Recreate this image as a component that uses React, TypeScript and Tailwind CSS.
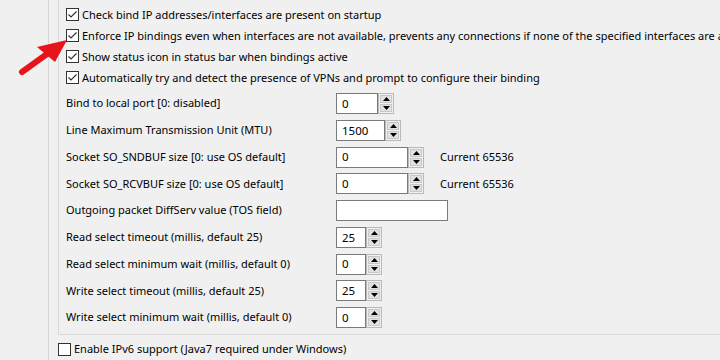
import React from 'react';

const font = { fontFamily: '"Segoe UI", "Noto Sans", sans-serif' };

function CheckBox({ checked }: { checked: boolean }) {
    return (
        <div className="w-[13px] h-[13px] border border-[#333333] bg-white flex items-center justify-center shrink-0">
            {checked && (
                <svg width="11" height="11" viewBox="0 0 11 11">
                    <path d="M1.5 5.5 L4 8 L9.5 2.5" stroke="#333" strokeWidth="1.2" fill="none" />
                </svg>
            )}
        </div>
    );
}

function Spinner({ value, width }: { value: string; width: number }) {
    return (
        <div className="flex h-[21px]">
            <div
                className="border border-[#7a7a7a] bg-white h-full flex items-center pl-[5px] text-[11.5px] text-black"
                style={{ width }}
            >
                {value}
            </div>
            <div className="w-[16px] h-full border border-[#b9b9b9] bg-[#f0f0f0] flex flex-col p-px gap-px">
                <div className="flex-1 bg-[#e1e1e1] border border-[#c8c8c8] flex items-center justify-center">
                    <svg width="7" height="4" viewBox="0 0 7 4"><path d="M0 4 L3.5 0 L7 4 Z" fill="#000" /></svg>
                </div>
                <div className="flex-1 bg-[#e1e1e1] border border-[#c8c8c8] flex items-center justify-center">
                    <svg width="7" height="4" viewBox="0 0 7 4"><path d="M0 0 L3.5 4 L7 0 Z" fill="#000" /></svg>
                </div>
            </div>
        </div>
    );
}

const checks = [
    'Check bind IP addresses/interfaces are present on startup',
    'Enforce IP bindings even when interfaces are not available, prevents any connections if none of the specified interfaces are available',
    'Show status icon in status bar when bindings active',
    'Automatically try and detect the presence of VPNs and prompt to configure their binding',
];

const rows: { label: string; value?: string; width: number; extra?: string; text?: boolean }[] = [
    { label: 'Bind to local port [0: disabled]', value: '0', width: 42 },
    { label: 'Line Maximum Transmission Unit (MTU)', value: '1500', width: 49 },
    { label: 'Socket SO_SNDBUF size [0: use OS default]', value: '0', width: 72, extra: 'Current 65536' },
    { label: 'Socket SO_RCVBUF size [0: use OS default]', value: '0', width: 72, extra: 'Current 65536' },
    { label: 'Outgoing packet DiffServ value (TOS field)', width: 112, text: true },
    { label: 'Read select timeout (millis, default 25)', value: '25', width: 30 },
    { label: 'Read select minimum wait (millis, default 0)', value: '0', width: 30 },
    { label: 'Write select timeout (millis, default 25)', value: '25', width: 30 },
    { label: 'Write select minimum wait (millis, default 0)', value: '0', width: 30 },
];

export default function App() {
    return (
        <div className="w-[720px] h-[360px] bg-[#f0f0f0] overflow-hidden relative text-[11px] text-black" style={font}>
            <div className="ml-[48px] h-full border-l border-[#d7d7d7] pl-[9px]">
                <div className="border-l border-b border-[#d9d9d9] h-[335px] pl-[7px] pt-[8px] overflow-hidden">
                    <div className="flex flex-col gap-[8px]">
                        {checks.map((c) => (
                            <div key={c} className="flex items-center gap-[3px] h-[13px] whitespace-nowrap">
                                <CheckBox checked />
                                <span className="leading-none">{c}</span>
                            </div>
                        ))}
                    </div>
                    <div className="mt-[9px] flex flex-col gap-[5.75px]">
                        {rows.map((r) => (
                            <div key={r.label} className="flex items-center h-[21px] whitespace-nowrap">
                                <div className="w-[270px]">{r.label}</div>
                                {r.text ? (
                                    <div className="h-[21px] border border-[#7a7a7a] bg-white" style={{ width: r.width }} />
                                ) : (
                                    <Spinner value={r.value!} width={r.width} />
                                )}
                                {r.extra && <div className="ml-[16px]">{r.extra}</div>}
                            </div>
                        ))}
                    </div>
                </div>
                <div className="flex items-center gap-[3px] mt-[8px] h-[13px] whitespace-nowrap">
                    <CheckBox checked={false} />
                    <span>Enable IPv6 support (Java7 required under Windows)</span>
                </div>
            </div>
            <svg className="absolute left-0 top-0" width="80" height="80" viewBox="0 0 80 80">
                <path d="M22 72 L47 54" stroke="#e8141b" strokeWidth="6" strokeLinecap="round" />
                <path d="M67 40 L37 47 L55 62 Z" fill="#e8141b" />
            </svg>
        </div>
    );
}
